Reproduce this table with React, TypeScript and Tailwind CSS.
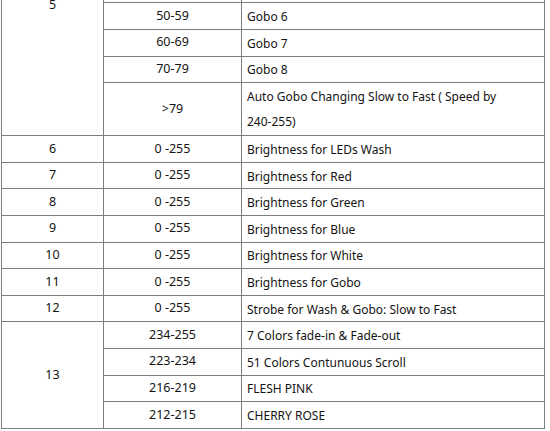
import React from 'react';

type Row = { ch?: string; span?: number; val: string; desc: React.ReactNode; tall?: boolean; first?: boolean };

const rows: Row[] = [
  { ch: '5', span: 9, val: '10-19', desc: 'Gobo 1', first: true },
  { val: '20-29', desc: 'Gobo 2' },
  { val: '30-39', desc: 'Gobo 3' },
  { val: '40-44', desc: 'Gobo 4' },
  { val: '45-49', desc: 'Gobo 5' },
  { val: '50-59', desc: 'Gobo 6' },
  { val: '60-69', desc: 'Gobo 7' },
  { val: '70-79', desc: 'Gobo 8' },
  {
    val: '>79',
    tall: true,
    desc: (
      <>
        Auto Gobo Changing Slow to Fast ( Speed by
        <br />
        240-255)
      </>
    ),
  },
  { ch: '6', span: 1, val: '0 -255', desc: 'Brightness for LEDs Wash' },
  { ch: '7', span: 1, val: '0 -255', desc: 'Brightness for Red' },
  { ch: '8', span: 1, val: '0 -255', desc: 'Brightness for Green' },
  { ch: '9', span: 1, val: '0 -255', desc: 'Brightness for Blue' },
  { ch: '10', span: 1, val: '0 -255', desc: 'Brightness for White' },
  { ch: '11', span: 1, val: '0 -255', desc: 'Brightness for Gobo' },
  { ch: '12', span: 1, val: '0 -255', desc: 'Strobe for Wash & Gobo: Slow to Fast' },
  { ch: '13', span: 4, val: '234-255', desc: '7 Colors fade-in & Fade-out' },
  { val: '223-234', desc: '51 Colors Contunuous Scroll' },
  { val: '216-219', desc: 'FLESH PINK' },
  { val: '212-215', desc: 'CHERRY ROSE' },
];

const cell = 'border-[1.5px] border-[#7d7d7d] align-middle';

export default function App() {
  return (
    <div className="h-[431px] w-[550px] overflow-hidden bg-white">
      <div className="-mt-[125px] pl-[1px]">
        <table
          className="w-[544px] table-fixed border-collapse text-[12.5px] text-[#141414]"
          style={{ fontFamily: '"Noto Sans", "Open Sans", sans-serif' }}
        >
          <colgroup>
            <col className="w-[102px]" />
            <col className="w-[138px]" />
            <col />
          </colgroup>
          <tbody>
            {rows.map((r, i) => (
              <tr key={i} className={r.tall ? 'h-[53px]' : r.first ? 'h-[20.6px]' : 'h-[26.6px]'}>
                {r.ch && (
                  <td rowSpan={r.span} className={`${cell} text-center`}>
                    {r.ch}
                  </td>
                )}
                <td className={`${cell} text-center`}>{r.val}</td>
                <td
                  className={`${cell} pl-[5px] text-[12px] ${
                    r.tall ? 'leading-[25px]' : 'pt-[2px] leading-[18px]'
                  }`}
                >
                  {r.desc}
                </td>
              </tr>
            ))}
          </tbody>
        </table>
      </div>
    </div>
  );
}
